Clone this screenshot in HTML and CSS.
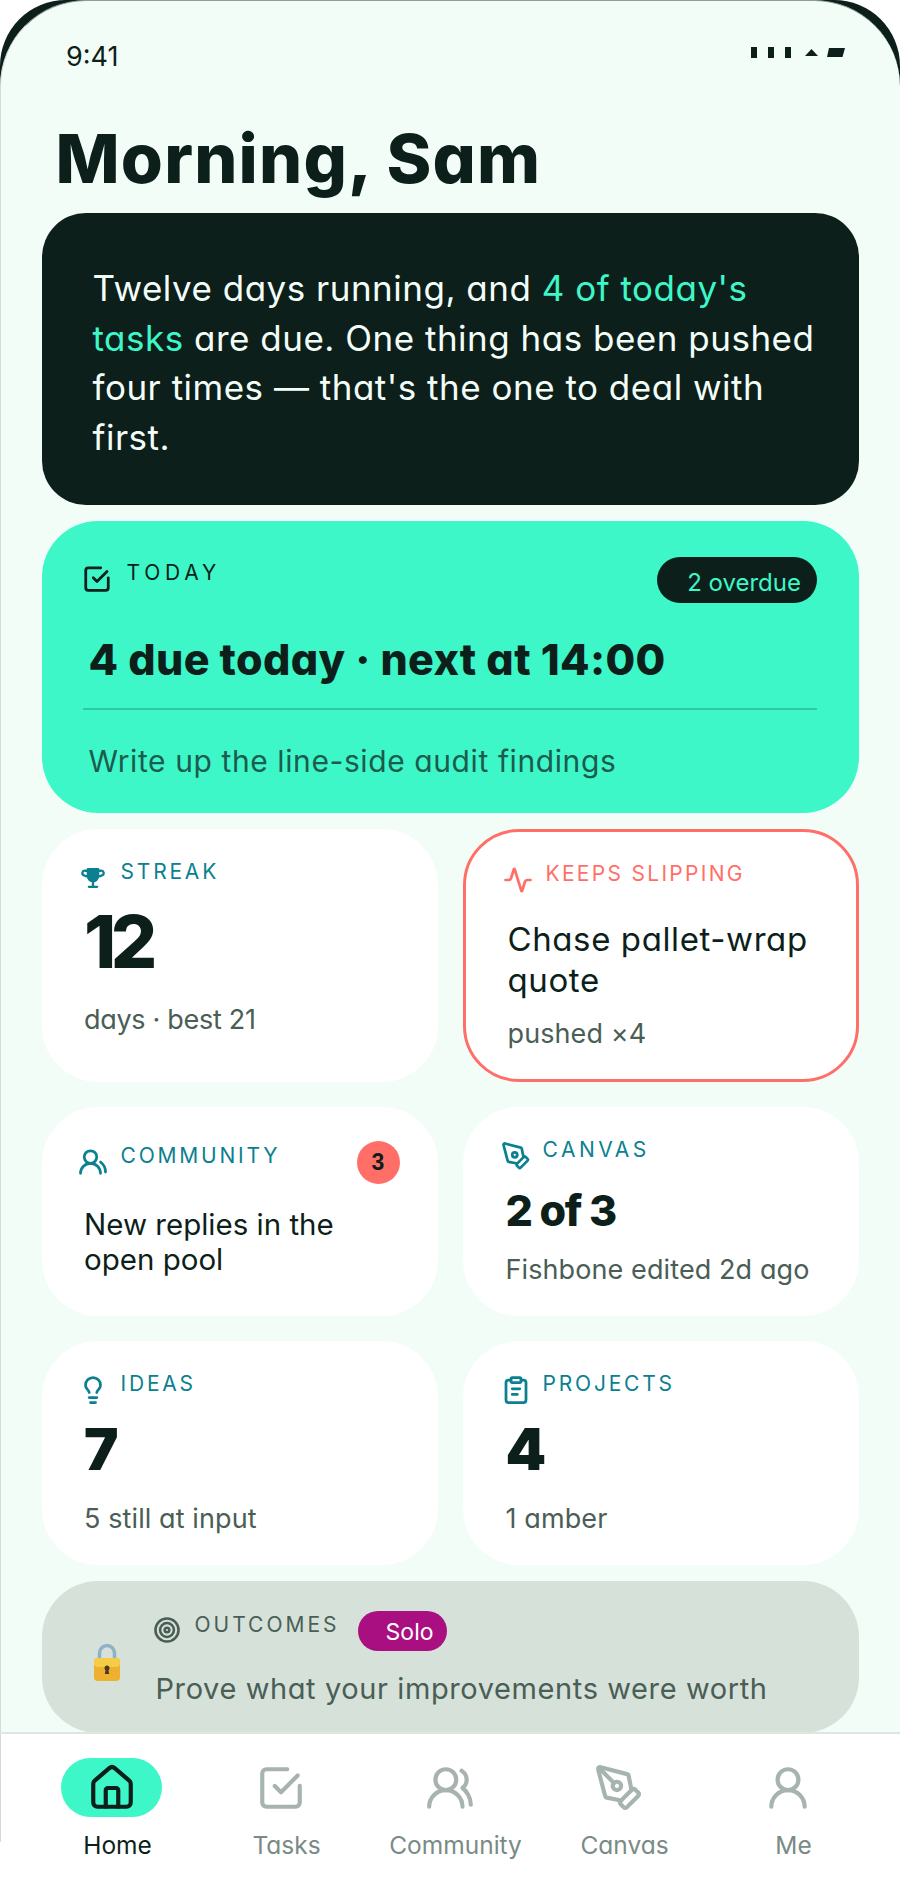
FILE: index.html
```html
<!DOCTYPE html>
<html lang="en">
<head>
    <meta charset="UTF-8">
    <meta name="viewport" content="width=device-width, initial-scale=1.0">
    <title>Home</title>
    <link rel="stylesheet" href="styles.css">
</head>
<body>

<div class="phone">
    <div class="screen">
        <div class="status">
            <span class="clock">9:41</span>
            <svg class="status-icons" width="94" height="11" viewBox="0 0 94 11" fill="#0d1f1a">
                <rect x="0" y="0" width="6" height="11"/>
                <rect x="17" y="0" width="6" height="11"/>
                <rect x="34" y="0" width="6" height="11"/>
                <path d="M54 9l6.500-7 6.500 7z"/>
                <path d="M78 1h16l-2.500 9h-15.500z"/>
            </svg>
        </div>

        <main class="content">
            <h1>Morning, Sam</h1>

            <section class="brief">
                Twelve days running, and <span class="hl">4 of today's</span><br>
                <span class="hl">tasks</span> are due. One thing has been pushed<br>
                four times — that's the one to deal with<br>
                first.
            </section>

            <section class="today">
                <div class="today-head">
                    <div class="head">
                        <svg class="icon" viewBox="0 0 24 24"><path d="M9 11l3 3l8-8"/><path d="M21 11v8a2 2 0 0 1-2 2H5a2 2 0 0 1-2-2V5a2 2 0 0 1 2-2h10"/></svg>
                        <span class="label">Today</span>
                    </div>
                    <span class="overdue">2 overdue</span>
                </div>
                <div class="today-title">4 due today · next at 14:00</div>
                <hr>
                <div class="today-sub">Write up the line-side audit findings</div>
            </section>

            <div class="cards">
                <a class="card card-streak">
                    <div class="head">
                        <svg class="icon" viewBox="-2.500 -2.500 29 29"><path class="solid" d="M7 3.500h10v6.500a5 5 0 0 1-10 0z"/><path d="M7 5H4.500a1.500 1.500 0 0 0-1 4.500c1 .8 2.300 1 3.500 1"/><path d="M17 5h2.500a1.500 1.500 0 0 1 1 4.500c-1 .8-2.300 1-3.500 1"/><path d="M12 15v5"/><path d="M8 20.500h8"/></svg>
                        <span class="label">Streak</span>
                    </div>
                    <div class="big">12</div>
                    <div class="sub">days · best 21</div>
                </a>

                <a class="card card-slip">
                    <div class="head">
                        <svg class="icon" viewBox="0 0 24 24"><path d="M22 12h-2.480a2 2 0 0 0-1.930 1.460l-2.350 8.360a.25.25 0 0 1-.48 0L9.240 2.180a.25.25 0 0 0-.48 0l-2.350 8.360A2 2 0 0 1 4.490 12H2" transform="translate(0 1.200) scale(1 .9)"/></svg>
                        <span class="label">Keeps slipping</span>
                    </div>
                    <div class="task">Chase pallet-wrap quote</div>
                    <div class="sub">pushed ×4</div>
                </a>

                <a class="card card-community">
                    <div class="head">
                        <svg class="icon" viewBox="0 0 24 24"><path d="M18 21a8 8 0 0 0-16 0"/><circle cx="10" cy="8" r="5"/><path d="M22 20c0-3.370-2-6.500-4-8"/></svg>
                        <span class="label">Community</span>
                        <span class="badge">3</span>
                    </div>
                    <div class="task">New replies in the open pool</div>
                </a>

                <a class="card card-canvas">
                    <div class="head">
                        <svg class="icon" viewBox="0 0 24 24"><path d="M15.707 21.293a1 1 0 0 1-1.414 0l-1.586-1.586a1 1 0 0 1 0-1.414l5.586-5.586a1 1 0 0 1 1.414 0l1.586 1.586a1 1 0 0 1 0 1.414z"/><path d="M18 13l-1.375-6.874a1 1 0 0 0-.746-.776L3.235 2.028a1 1 0 0 0-1.207 1.207L5.350 15.879a1 1 0 0 0 .776.746L13 18"/><circle cx="11" cy="11" r="2"/></svg>
                        <span class="label">Canvas</span>
                    </div>
                    <div class="mid">2 of 3</div>
                    <div class="sub">Fishbone edited 2d ago</div>
                </a>

                <a class="card card-count">
                    <div class="head">
                        <svg class="icon" viewBox="0 0 24 24"><path d="M15 14c.2-1 .7-1.700 1.500-2.500 1-.9 1.500-2.200 1.500-3.500A6 6 0 0 0 6 8c0 1 .2 2.200 1.500 3.500.7.7 1.300 1.500 1.500 2.500"/><path d="M9 18h6"/><path d="M10 22h4"/></svg>
                        <span class="label">Ideas</span>
                    </div>
                    <div class="count">7</div>
                    <div class="sub">5 still at input</div>
                </a>

                <a class="card card-count card-right">
                    <div class="head">
                        <svg class="icon" viewBox="0 0 24 24"><rect x="8" y="2" width="8" height="4" rx="1"/><path d="M16 4h2a2 2 0 0 1 2 2v14a2 2 0 0 1-2 2H6a2 2 0 0 1-2-2V6a2 2 0 0 1 2-2h2"/><path d="M9 11h6"/><path d="M9 15.500h4"/></svg>
                        <span class="label">Projects</span>
                    </div>
                    <div class="count">4</div>
                    <div class="sub">1 amber</div>
                </a>
            </div>

            <section class="outcomes">
                <svg class="lock" width="26" height="38" viewBox="0 0 26 38">
                    <path d="M5.500 17V10a7.500 7.500 0 0 1 15 0v7" fill="none" stroke="#8fb2c6" stroke-width="3.500"/>
                    <rect x="0" y="15" width="26" height="23" rx="4" fill="#eeb02f"/>
                    <rect x="0" y="15" width="26" height="9" rx="4" fill="#f6cb45"/>
                    <circle cx="13" cy="25" r="2.500" fill="#4a3a20"/>
                    <path d="M11.800 26h2.400l1 5h-4.400z" fill="#4a3a20"/>
                </svg>
                <div class="outcomes-body">
                    <div class="head">
                        <svg class="icon" viewBox="-1 -1 26 26"><circle cx="12" cy="12" r="10"/><circle cx="12" cy="12" r="6"/><circle cx="12" cy="12" r="2"/></svg>
                        <span class="label">Outcomes</span>
                        <span class="solo">Solo</span>
                    </div>
                    <div class="outcomes-text">Prove what your improvements were worth</div>
                </div>
            </section>
        </main>
    </div>

    <nav class="tabs">
        <a class="tab active">
            <span class="tab-icon"><svg viewBox="0 0 24 24"><path d="M15 21v-8a1 1 0 0 0-1-1h-4a1 1 0 0 0-1 1v8"/><path d="M3 10a2 2 0 0 1 .709-1.528l7-5.999a2 2 0 0 1 2.582 0l7 5.999A2 2 0 0 1 21 10v9a2 2 0 0 1-2 2H5a2 2 0 0 1-2-2z"/></svg></span>
            <span class="tab-label">Home</span>
        </a>
        <a class="tab">
            <span class="tab-icon"><svg viewBox="0 0 24 24"><path d="M9 11l3 3l8-8"/><path d="M21 11v8a2 2 0 0 1-2 2H5a2 2 0 0 1-2-2V5a2 2 0 0 1 2-2h10"/></svg></span>
            <span class="tab-label">Tasks</span>
        </a>
        <a class="tab">
            <span class="tab-icon"><svg viewBox="0 0 24 24"><path d="M18 21a8 8 0 0 0-16 0"/><circle cx="10" cy="8" r="5"/><path d="M22 20c0-3.370-2-6.500-4-8a5 5 0 0 0-.45-8.300"/></svg></span>
            <span class="tab-label">Community</span>
        </a>
        <a class="tab">
            <span class="tab-icon"><svg viewBox="0 0 24 24"><path d="M15.707 21.293a1 1 0 0 1-1.414 0l-1.586-1.586a1 1 0 0 1 0-1.414l5.586-5.586a1 1 0 0 1 1.414 0l1.586 1.586a1 1 0 0 1 0 1.414z"/><path d="M18 13l-1.375-6.874a1 1 0 0 0-.746-.776L3.235 2.028a1 1 0 0 0-1.207 1.207L5.350 15.879a1 1 0 0 0 .776.746L13 18"/><path d="M2.300 2.300l7.286 7.286"/><circle cx="11" cy="11" r="2"/></svg></span>
            <span class="tab-label">Canvas</span>
        </a>
        <a class="tab">
            <span class="tab-icon"><svg viewBox="0 0 24 24"><circle cx="12" cy="8" r="5"/><path d="M20 21a8 8 0 0 0-16 0"/></svg></span>
            <span class="tab-label">Me</span>
        </a>
    </nav>
</div>

</body>
</html>
```

FILE: styles.css
```css
* {
    box-sizing: border-box;
}
body {
    margin: 0;
    background: #fff;
    font-family: Inter, "Open Sans", sans-serif;
    font-feature-settings: "cv11";
    color: #0d1f1a;
}
.phone {
    width: 900px;
    height: 1899px;
    overflow: hidden;
    background: #0d1f1a;
    border-radius: 66px 66px 0 0;
}
.screen {
    height: 1732px;
    padding-top: 40px;
    background: #f3fdf8;
    border-top: 1px solid #8ca097;
    border-left: 1px solid #d3ddd8;
    border-radius: 86px 86px 0 0;
}

/* status bar */
.status {
    display: flex;
    justify-content: space-between;
    padding: 0 55px 0 65px;
    height: 32px;
}
.clock {
    font-size: 27px;
    line-height: 32px;
}
.status-icons {
    margin-top: 6px;
}

.content {
    padding: 0 41px 0 40.500px;
}
h1 {
    margin: 45px 0 15px 14px;
    font-size: 68px;
    line-height: 80px;
    font-weight: 800;
    letter-spacing: 1.200px;
}

/* dark summary */
.brief {
    height: 292px;
    padding: 51px 10px 0 51px;
    background: #0d1f1a;
    color: #f3fdf8;
    border-radius: 44px;
    font-size: 35px;
    line-height: 49.500px;
    letter-spacing: .5px;
    white-space: nowrap;
}
.hl {
    color: #3df7c9;
}

/* today */
.today {
    height: 292px;
    margin-top: 16px;
    padding: 36px 42px 0 41px;
    background: #3df7c9;
    border-radius: 56px;
}
.today-head {
    display: flex;
    justify-content: space-between;
    align-items: flex-start;
}
.today-head .head {
    margin-top: 7px;
    margin-left: 4px;
}
.today-head .label {
    margin-left: 15px;
    color: #0d1f1a;
    font-weight: 400;
    letter-spacing: 4.800px;
}
.today-head .icon {
    stroke: #0d1f1a;
}
.overdue {
    height: 46px;
    padding: 6px 16px 0 30px;
    background: #0d1f1a;
    color: #3df7c9;
    border-radius: 23px;
    font-size: 24px;
    line-height: 40px;
}
.today-title {
    margin: 28px 0 21px 6px;
    font-size: 43px;
    line-height: 56px;
    font-weight: 800;
    letter-spacing: .350px;
}
hr {
    height: 2px;
    margin: 0;
    border: none;
    background: #2ccaa7;
}
.today-sub {
    margin: 31px 0 0 6px;
    font-size: 30px;
    line-height: 40px;
    letter-spacing: .600px;
    color: #1c5b4d;
}

/* shared card head */
.head {
    display: flex;
    align-items: flex-start;
    height: 30px;
}
.icon {
    width: 30px;
    height: 30px;
    margin-left: -5px;
    flex: none;
    fill: none;
    stroke: #0b8090;
    stroke-width: 2.200;
    stroke-linecap: round;
    stroke-linejoin: round;
}
.icon .solid {
    fill: #0b8090;
}
.label {
    margin: 1px 0 0 13px;
    font-size: 21px;
    line-height: 16px;
    letter-spacing: 2.800px;
    color: #0b8090;
    text-transform: uppercase;
}

/* card grid */
.cards {
    display: grid;
    grid-template-columns: 396px 396px;
    grid-template-rows: 253px 209px 224px;
    gap: 25px;
    margin-top: 16px;
}
.card {
    display: block;
    padding: 34px 20px 0 42.500px;
    background: #fff;
    border-radius: 56px;
}
.card .icon {
    margin-left: -6.500px;
}
.card-slip {
    padding: 33px 20px 0 42px;
    border: 3px solid #ff6f68;
}
.card-slip .label {
    letter-spacing: 2.300px;
    color: #ff6f68;
}
.card-slip .icon {
    margin-left: -5px;
    stroke: #ff6f68;
}
.card-slip .task {
    margin-top: 24px;
    font-size: 33px;
    letter-spacing: .600px;
}
.card-community {
    padding-top: 40px;
}
.card-community .task {
    margin-top: 30px;
    padding-right: 60px;
    font-size: 29.500px;
    line-height: 35px;
}
.card-canvas,
.card-right {
    padding-left: 43px;
}
.card-canvas .icon,
.card-right .icon {
    margin-left: -5px;
}
.card-canvas .label,
.card-right .label {
    margin-left: 12px;
}
.card-canvas .label {
    letter-spacing: 3.500px;
}
.big {
    margin-top: 12px;
    font-size: 73px;
    line-height: 74px;
    font-weight: 800;
    letter-spacing: -5.500px;
}
.mid {
    margin-top: 13px;
    font-size: 43px;
    line-height: 52px;
    font-weight: 800;
    letter-spacing: -1.400px;
}
.count {
    margin-top: 14px;
    font-size: 58px;
    line-height: 60px;
    font-weight: 900;
}
.task {
    margin-top: 23px;
    font-size: 30px;
    line-height: 41px;
}
.sub {
    margin-top: 23px;
    font-size: 27px;
    line-height: 36px;
    letter-spacing: .100px;
    color: #4a5e56;
}
.card-streak .sub {
    letter-spacing: -.300px;
}
.card-count .sub {
    margin-top: 22px;
}
.card-slip .sub {
    margin-top: 15px;
}
.card-canvas .sub {
    margin-top: 16px;
}
.badge {
    width: 43px;
    height: 43px;
    margin: -6px 18px 0 auto;
    background: #ff6f68;
    border-radius: 50%;
    font-family: "Liberation Sans", sans-serif;
    font-weight: 700;
    font-size: 23px;
    line-height: 43px;
    text-align: center;
}

/* locked outcomes strip */
.outcomes {
    display: flex;
    align-items: flex-start;
    height: 152px;
    margin-top: 16px;
    padding: 30px 0 0 52px;
    background: #d5e1d9;
    border-radius: 56px;
}
.lock {
    margin-top: 32px;
    flex: none;
}
.outcomes-body {
    margin-left: 36px;
}
.outcomes-body .head {
    height: 40px;
}
.outcomes-body .icon {
    margin: 4px 0 0 -4px;
    stroke: #4a5e56;
}
.outcomes-body .label {
    margin-top: 6px;
    letter-spacing: 3px;
    color: #4a5e56;
}
.solo {
    height: 40px;
    margin-left: 18px;
    padding: 3px 13px 0 28px;
    background: #a90f80;
    color: #fff;
    border-radius: 20px;
    font-size: 23px;
    line-height: 37px;
}
.outcomes-text {
    margin: 19px 0 0 0;
    font-size: 29px;
    line-height: 38px;
    letter-spacing: .600px;
    color: #4a5e56;
    white-space: nowrap;
}

/* bottom tabs */
.tabs {
    display: grid;
    grid-template-columns: repeat(5, 169px);
    height: 167px;
    padding: 24px 0 0 27px;
    background: linear-gradient(#d3ddd8, #d3ddd8) left top / 1px 108px no-repeat #fff;
    border-top: 2px solid #dde7e2;
}
.tab {
    display: flex;
    flex-direction: column;
    align-items: center;
    color: #7a8a85;
}
.tab-icon {
    display: flex;
    align-items: center;
    justify-content: center;
    width: 101px;
    height: 59px;
    border-radius: 30px;
}
.tab-icon svg {
    width: 50px;
    height: 50px;
    fill: none;
    stroke: #a7b3af;
    stroke-width: 2;
    stroke-linecap: round;
    stroke-linejoin: round;
}
.tab-label {
    margin-top: 11px;
    padding-left: 12px;
    font-size: 24.500px;
    line-height: 34px;
    white-space: nowrap;
}
.active {
    color: #0d1f1a;
}
.active .tab-icon {
    background: #3df7c9;
}
.active .tab-icon svg {
    stroke: #0d1f1a;
}
```
